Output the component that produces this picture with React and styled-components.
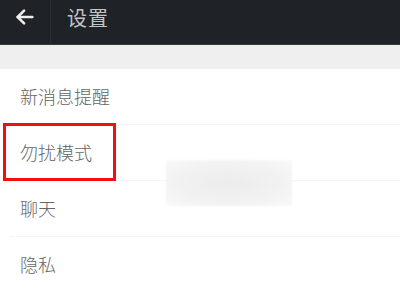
import React from 'react';
import styled, { createGlobalStyle } from 'styled-components';

const GlobalStyle = createGlobalStyle`
    html, body {
        margin: 0;
        padding: 0;
        background: #ffffff;
        font-family: "Noto Sans CJK SC", "Noto Sans", sans-serif;
    }
`;

const Page = styled.div`
    position: relative;
    width: 400px;
    height: 300px;
    overflow: hidden;
    background: #ffffff;
`;

const TopBar = styled.div`
    display: flex;
    align-items: center;
    height: 45px;
    padding-bottom: 10px;
    background: #1f2327;
    border-bottom: 1px solid #3a3d40;
    box-sizing: border-box;
`;

const BackButton = styled.div`
    display: flex;
    align-items: center;
    justify-content: center;
    width: 51px;
    height: 45px;
    margin-top: 10px;
    border-right: 1px solid #2a2e32;
    box-sizing: border-box;
    padding-bottom: 10px;
`;

const Title = styled.div`
    margin-left: 16px;
    font-size: 20px;
    color: #c4c5c6;
    letter-spacing: 1px;
`;

const Gap = styled.div`
    height: 24px;
    background: #efefef;
`;

const List = styled.ul`
    margin: 0;
    padding: 0;
    list-style: none;
`;

const Row = styled.li`
    position: relative;
    display: flex;
    align-items: center;
    height: 56px;
    padding-left: 20px;
    padding-bottom: 2px;
    box-sizing: border-box;
    font-size: 18px;
    font-weight: 300;
    color: #666666;
    &::after {
        content: '';
        position: absolute;
        left: 10px;
        right: 0;
        bottom: 0;
        height: 1px;
        background: ${p => (p.$last ? 'transparent' : '#f4f4f4')};
    }
`;

const Highlight = styled.div`
    position: absolute;
    left: 3px;
    top: 123px;
    width: 113px;
    height: 58px;
    border: 3px solid #f01010;
    box-sizing: border-box;
`;

const Smudge = styled.div`
    position: absolute;
    left: 166px;
    top: 160px;
    width: 126px;
    height: 46px;
    background: radial-gradient(ellipse at center, #ececec 0%, #f2f2f2 60%, #f9f9f9 100%);
    filter: blur(1px);
`;

const items = ['新消息提醒', '勿扰模式', '聊天', '隐私'];

const App = () => (
    <Page>
        <GlobalStyle />
        <TopBar>
            <BackButton>
                <svg width="22" height="22" viewBox="0 0 24 24" fill="none" stroke="#ededed" strokeWidth="2.8" strokeLinecap="round" strokeLinejoin="round">
                    <path d="M20 12H4" />
                    <path d="M11 5l-7 7 7 7" />
                </svg>
            </BackButton>
            <Title>设置</Title>
        </TopBar>
        <Gap />
        <List>
            {items.map((t, i) => (
                <Row key={t} $last={i === items.length - 1}>{t}</Row>
            ))}
        </List>
        <Smudge />
        <Highlight />
    </Page>
);

export default App;
